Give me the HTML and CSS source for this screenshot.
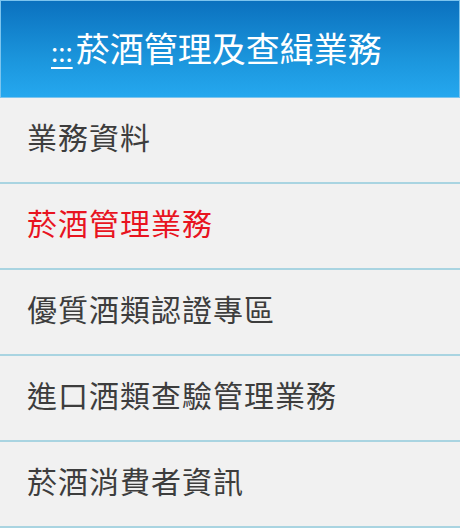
FILE: index.html
```html
<!DOCTYPE html>
<html lang="zh-Hant">
<head>
<meta charset="utf-8">
<title>菸酒管理及查緝業務</title>
<link rel="stylesheet" href="styles.css">
</head>
<body>
<nav class="side-menu">
  <h2 class="menu-title"><a class="accesskey" href="#">:::</a>菸酒管理及查緝業務</h2>
  <ul class="menu-list">
    <li class="menu-item"><a href="#">業務資料</a></li>
    <li class="menu-item active"><a href="#">菸酒管理業務</a></li>
    <li class="menu-item"><a href="#">優質酒類認證專區</a></li>
    <li class="menu-item"><a href="#">進口酒類查驗管理業務</a></li>
    <li class="menu-item"><a href="#">菸酒消費者資訊</a></li>
  </ul>
</nav>
</body>
</html>
```
FILE: styles.css
```css
html, body {
  margin: 0;
  padding: 0;
  background: #ffffff;
}
body {
  font-family: "Noto Sans CJK TC", "Noto Sans", sans-serif;
}
.side-menu {
  width: 460px;
  display: flex;
  flex-direction: column;
}
.menu-title {
  margin: 0;
  height: 94px;
  border: 1px solid #7cc4ee;
  background: linear-gradient(to bottom, #0b71bf 0%, #1b95dc 60%, #25a8ef 100%);
  color: #ffffff;
  font-size: 34px;
  font-weight: normal;
  line-height: 1;
  display: flex;
  align-items: center;
  padding-left: 50px;
  padding-bottom: 2px;
  box-sizing: content-box;
}
.accesskey {
  color: #ffffff;
  font-size: 26px;
  text-decoration: underline;
  text-decoration-thickness: 2px;
  text-underline-offset: 5px;
  margin-right: 3px;
  align-self: center;
  padding-top: 6px;
}
.menu-list {
  list-style: none;
  margin: 0;
  padding: 0;
}
.menu-item {
  background: #f1f1f1;
  height: 76px;
  padding-bottom: 8px;
  border-bottom: 2px solid #a9d4e1;
  display: flex;
  align-items: center;
  padding-left: 27px;
}
.menu-item a {
  color: #3d3d3d;
  text-decoration: none;
  font-size: 30px;
  letter-spacing: 1px;
  line-height: 1;
}
.menu-item.active a {
  color: #e8141f;
}
```
